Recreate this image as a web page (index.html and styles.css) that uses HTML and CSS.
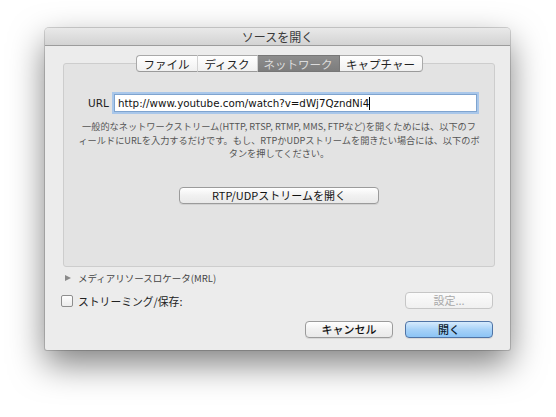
FILE: index.html
```html
<!DOCTYPE html>
<html lang="ja">
<head>
<meta charset="utf-8">
<title>ソースを開く</title>
<link rel="stylesheet" href="styles.css">
</head>
<body>
<div class="window">
  <div class="titlebar">ソースを開く</div>
  <div class="content">
    <div class="tabbox">
      <div class="tabs">
        <span class="tab t1">ファイル</span><span class="tab t2">ディスク</span><span class="tab t3 selected">ネットワーク</span><span class="tab t4">キャプチャー</span>
      </div>
      <div class="url-row">
        <span class="url-label">URL</span>
        <div class="url-input">http://www.youtube.com/watch?v=dWj7QzndNi4<span class="caret"></span></div>
      </div>
      <p class="desc">一般的なネットワークストリーム(HTTP, RTSP, RTMP, MMS, FTPなど)を開くためには、以下のフ<br>ィールドにURLを入力するだけです。もし、RTPかUDPストリームを開きたい場合には、以下のボ<br>タンを押してください。</p>
      <div class="rtp-row"><button class="btn rtp">RTP/UDPストリームを開く</button></div>
    </div>
    <div class="mrl"><span class="tri"></span>メディアリソースロケータ(MRL)</div>
    <div class="stream-row">
      <label class="stream-label"><span class="check"></span>ストリーミング/保存:</label>
      <button class="btn disabled">設定...</button>
    </div>
    <div class="actions">
      <button class="btn">キャンセル</button>
      <button class="btn primary">開く</button>
    </div>
  </div>
</div>
</body>
</html>
```
FILE: styles.css
```css
html, body {
  margin: 0;
  padding: 0;
  background: #ffffff;
  width: 556px;
  height: 417px;
  overflow: hidden;
  font-family: "Noto Sans CJK JP", "DejaVu Sans", sans-serif;
}

.window {
  margin: 28px 0 0 45px;
  width: 465px;
  height: 322px;
  background: #ececec;
  border-radius: 4px 4px 2px 2px;
  box-shadow: 0 0 0 1px rgba(0,0,0,0.16), 0 14px 34px rgba(0,0,0,0.5);
  overflow: hidden;
}

.titlebar {
  height: 17px;
  line-height: 17px;
  text-align: center;
  font-size: 12px;
  color: #3a3a3a;
  background: linear-gradient(#e9e9e9, #d3d3d3);
  border-bottom: 1px solid #9c9c9c;
}

.content {
  padding: 17px 15px 0 18px;
}

.tabbox {
  height: 202px;
  border: 1px solid #cdcdcd;
  border-radius: 3px;
  background: #e3e3e3;
}

.tabs {
  display: flex;
  justify-content: center;
  margin-top: -9px;
  height: 17px;
}

.tab {
  display: flex;
  align-items: center;
  justify-content: center;
  height: 15px;
  font-size: 11.5px;
  color: #222;
  background: linear-gradient(#ffffff, #f0f0f0);
  border-top: 1px solid #a9a9a9;
  border-bottom: 1px solid #9a9a9a;
  border-right: 1px solid #d2d2d2;
}
.t1 { width: 60px; border-left: 1px solid #a9a9a9; border-radius: 4px 0 0 4px; }
.t2 { width: 59px; }
.t3 { width: 81px; }
.t4 { width: 82px; border-right: 1px solid #a9a9a9; border-radius: 0 4px 4px 0; }
.tab.selected {
  background: linear-gradient(#8d8d8d, #7d7d7d);
  color: #dcdcdc;
  border-color: #777;
}

.url-row {
  display: flex;
  align-items: center;
  margin-top: 22px;
  padding: 0 17px 0 24px;
}
.url-label {
  width: 26px;
  font-family: "DejaVu Sans", sans-serif;
  font-size: 10.5px;
  color: #222;
}
.url-input {
  flex: 1;
  height: 16px;
  line-height: 16px;
  padding-left: 3px;
  background: #fff;
  border: 1px solid #7fa4cf;
  box-shadow: 0 0 0 2px #a9c7ea;
  font-family: "DejaVu Sans", sans-serif;
  font-size: 10.3px;
  color: #111;
  white-space: nowrap;
  display: flex;
  align-items: center;
}
.caret {
  display: inline-block;
  width: 1px;
  height: 13px;
  background: #000;
}

.desc {
  margin: 8px 0 0 0;
  text-align: center;
  font-size: 9.2px;
  line-height: 13.5px;
  color: #555;
  white-space: nowrap;
}

.rtp-row {
  display: flex;
  justify-content: center;
  margin-top: 26px;
}

.btn {
  font-family: "Noto Sans CJK JP", sans-serif;
  height: 17px;
  padding: 0;
  font-size: 11px;
  line-height: 15px;
  color: #111;
  background: linear-gradient(#ffffff, #f1f1f1 50%, #e9e9e9);
  border: 1px solid #9b9b9b;
  border-radius: 4px;
  box-shadow: 0 1px 0 rgba(0,0,0,0.08);
}
.rtp { width: 200px; }

.mrl {
  display: flex;
  align-items: center;
  height: 14px;
  margin-top: 4px;
  font-size: 9.5px;
  color: #444;
}
.tri {
  width: 0;
  height: 0;
  border-left: 6px solid #8a8a8a;
  border-top: 3.5px solid transparent;
  border-bottom: 3.5px solid transparent;
  margin: 0 7px 0 2px;
}

.stream-row {
  display: flex;
  align-items: center;
  justify-content: space-between;
  margin-top: 7px;
  padding-right: 2px;
}
.stream-label {
  display: flex;
  align-items: center;
  margin-left: -2px;
  font-size: 10.8px;
  color: #222;
}
.check {
  width: 10px;
  height: 10px;
  margin: 0 5px 0 0;
  border: 1px solid #8e8e8e;
  border-radius: 2px;
  background: linear-gradient(#fdfdfd, #ececec);
}
.btn.disabled {
  width: 88px;
  color: #a9a9a9;
  border-color: #c6c6c6;
  background: linear-gradient(#fbfbfb, #f0f0f0);
  box-shadow: none;
}

.actions {
  display: flex;
  justify-content: flex-end;
  gap: 12px;
  margin-top: 12px;
  padding-right: 2px;
}
.actions .btn { width: 88px; font-weight: 500; }
.btn.primary {
  background: linear-gradient(#d6ebfd, #a7d2f8 50%, #8cc4f5);
  border-color: #4f74a6;
  color: #0e1b2c;
}
```
